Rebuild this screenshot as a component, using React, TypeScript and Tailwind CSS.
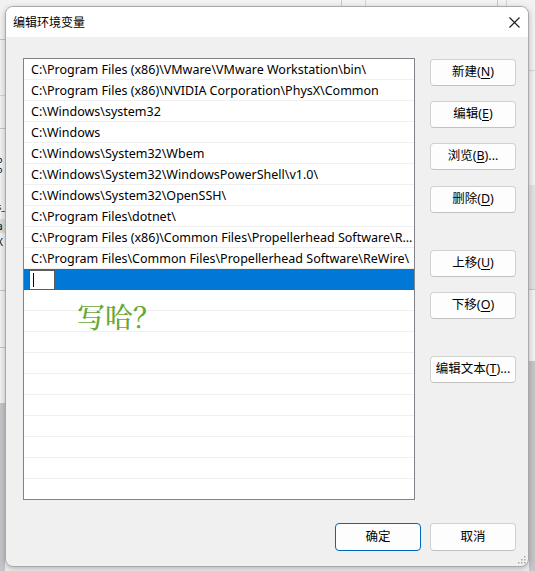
import React from 'react'

const PATHS = [
  'C:\\Program Files (x86)\\VMware\\VMware Workstation\\bin\\',
  'C:\\Program Files (x86)\\NVIDIA Corporation\\PhysX\\Common',
  'C:\\Windows\\system32',
  'C:\\Windows',
  'C:\\Windows\\System32\\Wbem',
  'C:\\Windows\\System32\\WindowsPowerShell\\v1.0\\',
  'C:\\Windows\\System32\\OpenSSH\\',
  'C:\\Program Files\\dotnet\\',
  'C:\\Program Files (x86)\\Common Files\\Propellerhead Software\\R...',
  'C:\\Program Files\\Common Files\\Propellerhead Software\\ReWire\\',
]

const EMPTY_ROWS = 10

// 按钮，括号里的快捷键带下划线
const DlgButton = ({
  label,
  accel,
  tail = '',
  className = '',
  primary = false,
}: {
  label: string
  accel?: string
  tail?: string
  className?: string
  primary?: boolean
}) => (
  <button
    className={`w-[86px] h-[27px] shrink-0 rounded-[4px] border bg-[#fdfdfd] text-[12.5px] text-black flex items-center justify-center leading-none ${
      primary ? 'border-[#0067c0]' : 'border-[#d1d1d1] border-b-[#c2c2c2]'
    } ${className}`}
  >
    <span>{label}</span>
    {accel && (
      <span>
        (<span className="underline underline-offset-2">{accel}</span>){tail}
      </span>
    )}
  </button>
)

// 左边露出的后面窗口
const LeftStrip = () => (
  <div className="w-[5px] shrink-0 flex flex-col overflow-hidden">
    <div className="h-[40px] shrink-0 border-b border-[#c4c4c4]" />
    <div className="h-[56px] shrink-0 border-b border-[#d6d6d6]" />
    <div className="h-[33px] shrink-0 border-b border-[#c4c4c4]" />
    <div className="h-[90px] shrink-0 flex flex-col -ml-[3px] text-[9px] leading-[10px] text-black">
      <span className="mt-[26px]">o</span>
      <span>o</span>
      <span className="mt-[27px]">s_</span>
    </div>
    <div className="h-[14px] shrink-0 bg-[#dcdcdc] -ml-[3px] text-[10px] leading-[14px]">a</div>
    <div className="h-[16px] shrink-0 -ml-[3px] pt-[2px] text-[10px] leading-[14px]">X</div>
    <div className="h-[42px] shrink-0 border-b border-[#c4c4c4]" />
    <div className="h-[57px] shrink-0 border-b border-[#c4c4c4]" />
    <div className="h-[55px] shrink-0" />
    <div className="flex-1 bg-[#c6c6ca]" />
  </div>
)

const RightStrip = () => (
  <div className="flex-1 flex flex-col">
    <div className="h-[71px] shrink-0 border-b border-[#d4d4d4]" />
    <div className="h-[114px] shrink-0" />
    <div className="h-[105px] shrink-0 bg-[#e2e2e2] border-b border-[#c4c4c4]" />
    <div className="h-[71px] shrink-0" />
    <div className="flex-1 bg-[#c6c6ca]" />
  </div>
)

const TopStrip = () => (
  <div className="h-[6px] shrink-0 flex pl-[336px]">
    <div className="w-[24px] border-l border-[#c9c9c9]" />
    <div className="w-[132px] border-l border-[#d6d6d6]" />
    <div className="w-[9px] border-l border-[#c9c9c9]" />
    <div className="w-[9px] border-l border-[#d6d6d6]" />
  </div>
)

const App = () => {
  return (
    <div className="relative w-[535px] h-[571px] overflow-hidden flex bg-[#f2f2f2] font-['Noto_Sans','Noto_Sans_CJK_SC',sans-serif]">
      <LeftStrip />

      <div className="w-[524px] shrink-0 flex flex-col">
        <TopStrip />

        <div className="relative h-[561px] shrink-0 rounded-[8px] border border-[#a9a9a9] bg-[#f0f0f0] shadow-[0_2px_6px_rgba(0,0,0,0.25)] overflow-hidden flex flex-col">
          {/* 标题栏 */}
          <div className="h-[30px] bg-white flex items-center justify-between pl-[7px] pr-[8px] shrink-0">
            <span className="text-[12px] text-black font-['Noto_Sans_CJK_SC',sans-serif]">编辑环境变量</span>
            <svg width="11" height="11" viewBox="0 0 11 11">
              <path d="M0.5 0.5 L10.5 10.5 M10.5 0.5 L0.5 10.5" stroke="#1a1a1a" strokeWidth="1.1" fill="none" />
            </svg>
          </div>

          <div className="flex-1 flex flex-col pl-[17px] pr-[12px] pt-[21px]">
            <div className="flex gap-[15px]">
              {/* 路径列表 */}
              <div className="w-[392px] h-[442px] shrink-0 border border-[#82828a] bg-white overflow-hidden">
                {PATHS.map((p) => (
                  <div
                    key={p}
                    className="h-[21px] border-b border-[#f0f0f0] pl-[7px] pr-[3px] pt-[3px] flex items-center text-[12.5px] text-black whitespace-nowrap overflow-hidden"
                  >
                    {p}
                  </div>
                ))}
                <div className="h-[21px] bg-[#0078d7] flex items-center pl-[5px]">
                  <div className="w-[26px] h-[20px] bg-white border border-[#5c5c5c] flex items-center pl-[3px]">
                    <div className="w-px h-[14px] bg-black" />
                  </div>
                </div>
                {Array.from({ length: EMPTY_ROWS }).map((_, i) => (
                  <div key={i} className="h-[21px] border-b border-[#f0f0f0]" />
                ))}
              </div>

              {/* 右侧按钮 */}
              <div className="flex flex-col">
                <DlgButton label="新建" accel="N" className="mt-[1px]" />
                <DlgButton label="编辑" accel="E" className="mt-[15px]" />
                <DlgButton label="浏览" accel="B" tail="..." className="mt-[15px]" />
                <DlgButton label="删除" accel="D" className="mt-[16px]" />
                <DlgButton label="上移" accel="U" className="mt-[37px]" />
                <DlgButton label="下移" accel="O" className="mt-[15px]" />
                <DlgButton label="编辑文本" accel="T" tail="..." className="mt-[37px]" />
              </div>
            </div>

            <div className="flex justify-end gap-[9px] mt-[23px]">
              <DlgButton label="确定" primary className="h-[28px]" />
              <DlgButton label="取消" className="h-[28px]" />
            </div>
          </div>

          {/* 尺寸手柄 */}
          <svg width="9" height="9" viewBox="0 0 9 9" className="absolute right-[2px] bottom-[2px]">
            <rect x="7" y="1" width="1.5" height="1.5" fill="#a8a8a8" />
            <rect x="4" y="4" width="1.5" height="1.5" fill="#a8a8a8" />
            <rect x="7" y="4" width="1.5" height="1.5" fill="#a8a8a8" />
            <rect x="1" y="7" width="1.5" height="1.5" fill="#a8a8a8" />
            <rect x="4" y="7" width="1.5" height="1.5" fill="#a8a8a8" />
            <rect x="7" y="7" width="1.5" height="1.5" fill="#a8a8a8" />
          </svg>
        </div>
      </div>

      <RightStrip />

      {/* 标注文字 */}
      <div className="absolute left-[77px] top-[302px] text-[28px] leading-none text-[#68a834] font-['Noto_Serif_CJK_SC','Noto_Sans_CJK_SC',serif] font-medium">
        写哈？
      </div>
    </div>
  )
}

export default App
